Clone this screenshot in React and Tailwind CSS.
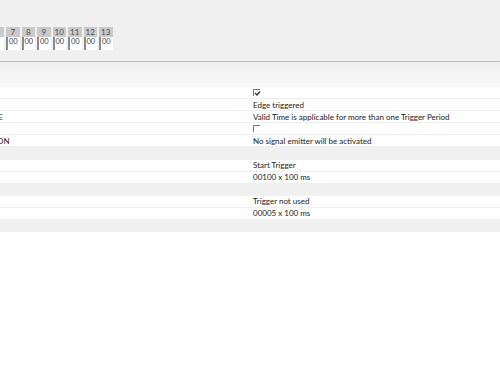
import React from "react";

const cols = ["7", "8", "9", "10", "11", "12", "13"];

const rows = [
    { label: "ENABLE", value: "check" },
    { label: "TRIGGER TYPE", value: "Edge triggered" },
    { label: "VALID TIME MODE", value: "Valid Time is applicable for more than one Trigger Period", end: 3 },
    { label: "INVERT", value: "box" },
    { label: "SIGNAL EMITTER ACTIVATION", value: "No signal emitter will be activated", end: 9.5 },
    { section: true },
    { label: "START", value: "Start Trigger" },
    { label: "START DELAY", value: "00100 x 100 ms" },
    { section: true },
    { label: "STOP", value: "Trigger not used" },
    { label: "STOP DELAY", value: "00005 x 100 ms" },
    { section: true },
];

function CheckBox({ checked }) {
    return (
        <div className="relative w-[7px] h-[7px] border-t border-l border-[#7a7a7a] bg-white">
            {checked && (
                <svg
                    width="7"
                    height="7"
                    viewBox="0 0 7 7"
                    className="absolute left-0 top-0"
                >
                    <path
                        d="M1 3 L3 5 L6 1.5"
                        stroke="#333"
                        strokeWidth="1.4"
                        fill="none"
                    />
                </svg>
            )}
        </div>
    );
}

export default function App() {
    return (
        <div className="w-[500px] h-[383px] bg-white overflow-hidden font-['Lato',sans-serif] text-[#222]">

            {/* TOP PANEL */}

            <div className="h-[61px] bg-[#f0f0f0] pt-[27px] overflow-hidden">
                <div className="flex gap-[2px] ml-[-9.5px]">

                    {/* partly scrolled out column */}

                    <div className="w-[13.5px] shrink-0">
                        <div className="h-[10px] bg-[#cacaca]" />
                        <div className="h-[13px] bg-white border-l-2 border-[#8c8c8c]" />
                    </div>

                    {cols.map((c) => (
                        <div key={c} className="w-[13.5px] shrink-0">
                            <div className="h-[10px] bg-[#cacaca] text-[8px] leading-[10px] text-center text-[#4a4a4a]">
                                {c}
                            </div>
                            <div className="h-[13px] bg-white border-l-2 border-[#8c8c8c] text-[7.5px] leading-[9px] pl-[1px] text-[#444]">
                                00
                            </div>
                        </div>
                    ))}
                </div>
            </div>

            <div className="h-[1px] bg-[#bcbcbc]" />

            <div className="h-[25px] bg-gradient-to-b from-[#efefef] to-[#f9f9f9]" />

            {/* PROPERTY TABLE */}

            <div className="text-[8px]">
                {rows.map((r, i) =>
                    r.section ? (
                        <div key={i} className="h-[12.1px] bg-[#f0f0f0]" />
                    ) : (
                        <div
                            key={i}
                            className="h-[12.1px] flex items-center bg-white border-b border-[#efefef]"
                        >
                            <div className="w-[253px] h-full overflow-hidden flex items-center">
                                {r.end && (
                                    <div
                                        className="flex justify-end whitespace-nowrap"
                                        style={{ width: r.end }}
                                    >
                                        {r.label}
                                    </div>
                                )}
                            </div>
                            <div className="whitespace-nowrap leading-none">
                                {r.value === "check" ? (
                                    <CheckBox checked />
                                ) : r.value === "box" ? (
                                    <CheckBox />
                                ) : (
                                    r.value
                                )}
                            </div>
                        </div>
                    )
                )}
            </div>

        </div>
    );
}
